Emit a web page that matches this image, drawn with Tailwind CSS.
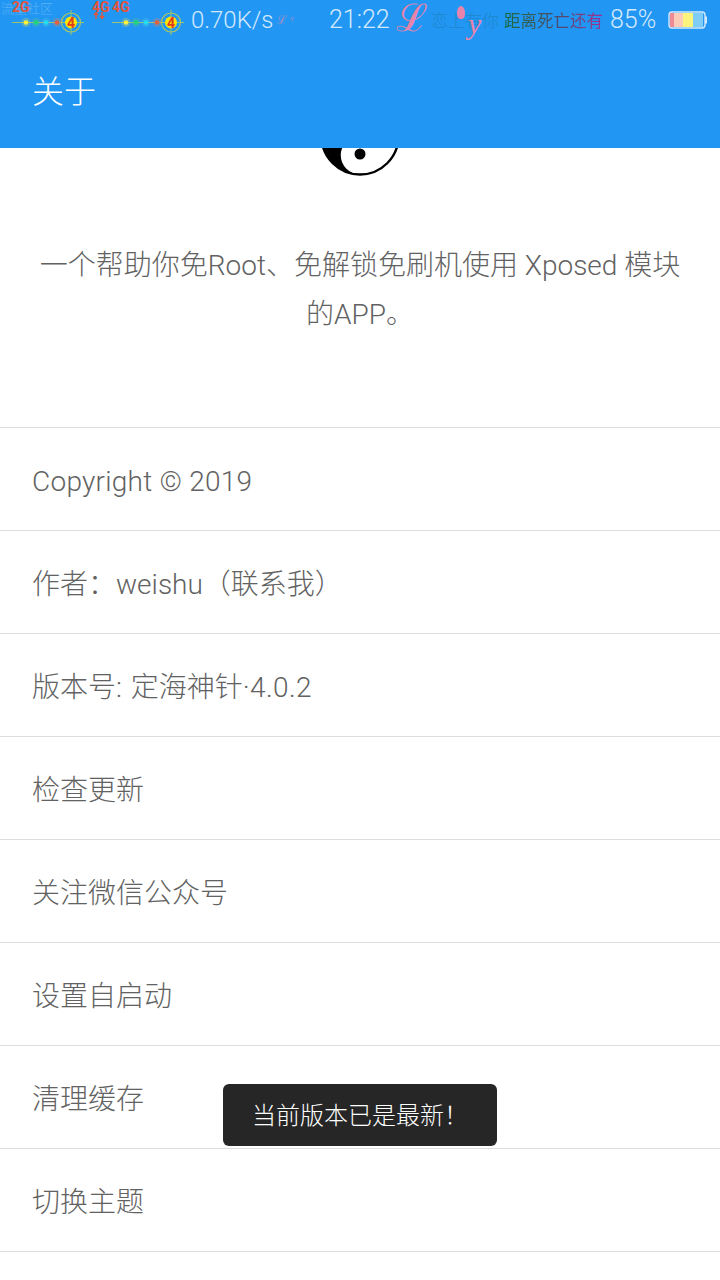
<!DOCTYPE html>
<html lang="en">
<head>
  <meta charset="UTF-8">
  <meta name="viewport" content="width=device-width, initial-scale=1.0">
  <title>关于</title>
  <script src="https://cdn.jsdelivr.net/npm/@tailwindcss/browser@4"></script>
</head>
<body class="w-[720px] h-[1280px] overflow-hidden bg-white relative font-['Roboto','Noto_Sans_CJK_SC',sans-serif] font-light text-[#626262]">

  <!-- Header with status bar -->
  <header class="bg-[#2196f3] h-[148px] relative z-10">
    <div class="h-[40px] flex items-center relative text-[#d3e9fb]">
      <!-- signal 1 -->
      <div class="w-[100px] h-[40px] relative shrink-0">
        <span class="absolute left-[1px] top-[-2px] text-[13px] text-[#5db2f5] font-['Noto_Sans_CJK_SC']">流量社区</span>
        <span class="absolute left-[12px] top-[-3px] text-[14px] font-bold text-[#e2553c]">2G</span>
        <svg class="absolute left-[10px] top-[8px]" width="76" height="30" viewBox="0 0 76 30">
          <path d="M2 14.5H74M61 2V27" stroke="#9cc56c" stroke-width="1" fill="none"/>
          <circle cx="61" cy="14.5" r="9.5" fill="none" stroke="#a5c56a" stroke-width="1.2"/>
          <circle cx="16" cy="14.5" r="4.5" fill="#c5d36a" opacity=".35"/>
          <circle cx="26" cy="14.5" r="4.5" fill="#4fc48f" opacity=".35"/>
          <circle cx="36" cy="14.5" r="4.5" fill="#4fc4e0" opacity=".35"/>
          <circle cx="47" cy="14.5" r="4.5" fill="#c98a70" opacity=".35"/>
          <circle cx="16" cy="14.5" r="2.2" fill="#fff23a"/>
          <circle cx="26" cy="14.5" r="2.2" fill="#1fd67a"/>
          <circle cx="36" cy="14.5" r="2.2" fill="#22e0f0"/>
          <circle cx="47" cy="14.5" r="2.2" fill="#e2603c"/>
          <circle cx="61" cy="14.5" r="6" fill="#ffe600"/>
          <text x="61" y="19.5" text-anchor="middle" font-size="14" font-weight="700" fill="#e23c1c" font-family="Roboto">4</text>
        </svg>
      </div>
      <!-- signal 2 -->
      <div class="w-[91px] h-[40px] relative shrink-0">
        <span class="absolute left-[-8px] top-[-3px] text-[14px] font-bold text-[#e2553c]">4G</span>
        <span class="absolute left-[12px] top-[-3px] text-[14px] font-bold text-[#e2553c]">4G</span>
        <svg class="absolute left-[-7px] top-[12px]" width="12" height="7" viewBox="0 0 12 7">
          <path d="M3 7V1M1 3L3 .5L5 3M9 0V6M7 4L9 6.5L11 4" stroke="#e2553c" stroke-width="1.4" fill="none"/>
        </svg>
        <svg class="absolute left-[10px] top-[8px]" width="76" height="30" viewBox="0 0 76 30">
          <path d="M2 14.5H74M61 2V27" stroke="#9cc56c" stroke-width="1" fill="none"/>
          <circle cx="61" cy="14.5" r="9.5" fill="none" stroke="#a5c56a" stroke-width="1.2"/>
          <circle cx="16" cy="14.5" r="4.5" fill="#c5d36a" opacity=".35"/>
          <circle cx="26" cy="14.5" r="4.5" fill="#4fc48f" opacity=".35"/>
          <circle cx="36" cy="14.5" r="4.5" fill="#4fc4e0" opacity=".35"/>
          <circle cx="47" cy="14.5" r="4.5" fill="#c98a70" opacity=".35"/>
          <circle cx="16" cy="14.5" r="2.2" fill="#fff23a"/>
          <circle cx="26" cy="14.5" r="2.2" fill="#1fd67a"/>
          <circle cx="36" cy="14.5" r="2.2" fill="#22e0f0"/>
          <circle cx="47" cy="14.5" r="2.2" fill="#e2603c"/>
          <circle cx="61" cy="14.5" r="6" fill="#ffe600"/>
          <text x="61" y="19.5" text-anchor="middle" font-size="14" font-weight="700" fill="#e23c1c" font-family="Roboto">4</text>
        </svg>
      </div>
      <span class="text-[24px] w-[86px] shrink-0">0.70K/s</span>
      <span class="w-[52px] shrink-0 text-[12px] text-[#e58ab0] font-['DejaVu_Sans'] opacity-70">ℒ ʸ</span>
      <span class="text-[25px] w-[67px] shrink-0">21:22</span>
      <!-- decorative signature -->
      <div class="w-[108px] h-[40px] relative shrink-0">
        <span class="absolute left-[0px] top-[0px] text-[38px] leading-[36px] text-[#e884ab] font-['DejaVu_Sans']">ℒ</span>
        <span class="absolute left-[35px] top-[8px] text-[17px] leading-[24px] whitespace-nowrap text-[#1f86cc] font-['Noto_Sans_CJK_SC']">恋上有你</span>
        <span class="absolute left-[61px] top-[6px] w-[8px] h-[13px] rounded-[60%_60%_50%_50%] bg-[#e884ab]"></span>
        <span class="absolute left-[72px] top-[8px] text-[30px] leading-[32px] italic text-[#e884ab] font-['Liberation_Serif']">y</span>
      </div>
      <span class="text-[16.5px] w-[106px] shrink-0 font-normal font-['Noto_Sans_CJK_SC'] text-transparent bg-clip-text bg-gradient-to-r from-[#0f6a3a] via-[#4a4a6a] to-[#ab2099]">距离死亡还有</span>
      <span class="text-[25px] w-[58px] shrink-0">85%</span>
      <svg width="40" height="18" viewBox="0 0 40 18" class="shrink-0">
        <rect x="1" y="1" width="36" height="16" rx="3" fill="none" stroke="#d3e9fb" stroke-width="1.4"/>
        <rect x="37" y="5.5" width="2" height="7" fill="#d3e9fb"/>
        <rect x="2" y="2" width="4" height="14" fill="#f08a96"/>
        <rect x="6" y="2" width="9" height="14" fill="#fccbb8"/>
        <rect x="15" y="2" width="10" height="14" fill="#fbf47c"/>
        <rect x="25" y="2" width="10" height="14" fill="#7fcdf7"/>
      </svg>
    </div>
    <h1 class="pl-[32px] text-[32px] leading-[44px] mt-[30px] text-white">关于</h1>
  </header>

  <main class="h-[1132px] overflow-hidden">
    <!-- yin yang logo, scrolled mostly under the header -->
    <svg class="block mx-auto mt-[-52px]" width="80" height="80" viewBox="0 0 80 80">
      <circle cx="40" cy="40" r="38.5" fill="#fff" stroke="#000" stroke-width="2.4"/>
      <path d="M40 1.5A38.5 38.5 0 0 0 40 78.5A19.25 19.25 0 0 1 40 40A19.25 19.25 0 0 0 40 1.5Z" fill="#000"/>
      <circle cx="40" cy="58" r="5.5" fill="#000"/>
    </svg>

    <p class="text-[28px] leading-[49px] text-center px-[32px] mt-[65px] mb-[88px] h-[98px]">一个帮助你免Root、免解锁免刷机使用 Xposed 模块的APP。</p>

    <ul class="border-t border-[#dddddd]">
      <li class="h-[103px] border-b border-[#dddddd] flex items-center pl-[32px] pt-[6px] text-[28px] tracking-[0.25px]">Copyright © 2019</li>
      <li class="h-[103px] border-b border-[#dddddd] flex items-center pl-[32px] pt-[6px] text-[28px]">作者：weishu（联系我）</li>
      <li class="h-[103px] border-b border-[#dddddd] flex items-center pl-[32px] pt-[6px] text-[28px]"><span>版本号<span class="tracking-[1px]">: </span>定海神针<span class="tracking-[0.4px]">·4.0.2</span></span></li>
      <li class="h-[103px] border-b border-[#dddddd] flex items-center pl-[32px] pt-[6px] text-[28px]">检查更新</li>
      <li class="h-[103px] border-b border-[#dddddd] flex items-center pl-[32px] pt-[6px] text-[28px]">关注微信公众号</li>
      <li class="h-[103px] border-b border-[#dddddd] flex items-center pl-[32px] pt-[6px] text-[28px]">设置自启动</li>
      <li class="h-[103px] border-b border-[#dddddd] flex items-center pl-[32px] pt-[6px] text-[28px]">清理缓存</li>
      <li class="h-[103px] border-b border-[#dddddd] flex items-center pl-[32px] pt-[6px] text-[28px]">切换主题</li>
    </ul>
  </main>

  <!-- toast -->
  <div class="absolute left-[223px] top-[1084px] w-[274px] h-[62px] rounded-[6px] bg-[#262626] text-white text-[24px] flex items-center pl-[29px] pt-[2px] z-20">当前版本已是最新！</div>
</body>
</html>
